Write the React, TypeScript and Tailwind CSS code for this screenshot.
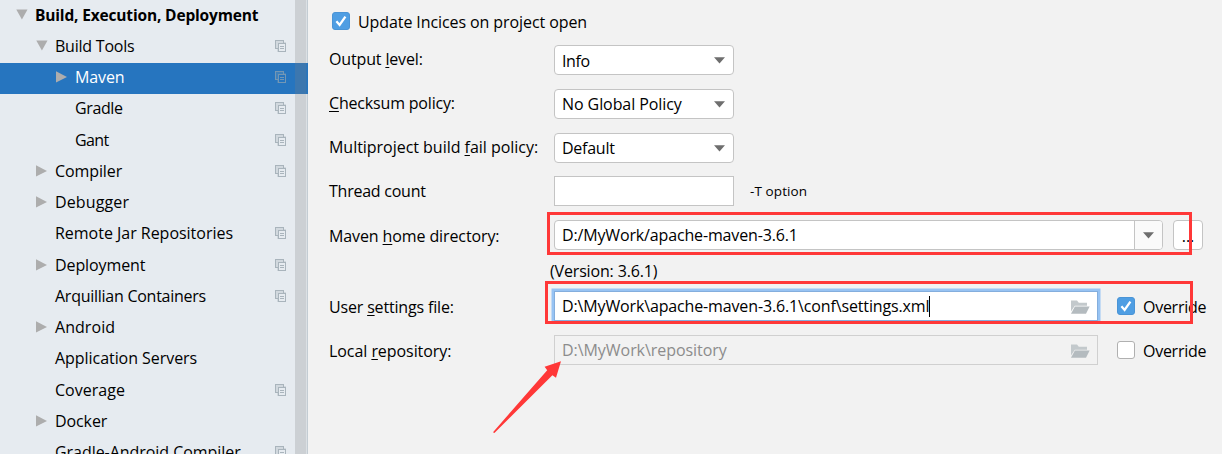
import React from "react";

type Node = {
  label: string;
  indent: string;
  track?: string;
  arrow?: "down" | "right";
  project?: boolean;
  selected?: boolean;
  bold?: boolean;
};

const nodes: Node[] = [
  { label: "Build, Execution, Deployment", indent: "pl-4", track: "tracking-[-0.16px]", arrow: "down", bold: true },
  { label: "Build Tools", indent: "pl-9", track: "tracking-[-0.22px]", arrow: "down", project: true },
  { label: "Maven", indent: "pl-14", track: "tracking-[-0.1px]", arrow: "right", project: true, selected: true },
  { label: "Gradle", indent: "pl-14", track: "tracking-[-0.38px]", project: true },
  { label: "Gant", indent: "pl-14", track: "tracking-[-0.6px]", project: true },
  { label: "Compiler", indent: "pl-9", track: "tracking-[-0.1px]", arrow: "right", project: true },
  { label: "Debugger", indent: "pl-9", track: "tracking-[0.12px]", arrow: "right" },
  { label: "Remote Jar Repositories", indent: "pl-9", track: "tracking-[-0.02px]", project: true },
  { label: "Deployment", indent: "pl-9", track: "tracking-[-0.1px]", arrow: "right", project: true },
  { label: "Arquillian Containers", indent: "pl-9", track: "tracking-[-0.26px]", project: true },
  { label: "Android", indent: "pl-9", track: "tracking-[0.05px]", arrow: "right" },
  { label: "Application Servers", indent: "pl-9", track: "tracking-[-0.05px]" },
  { label: "Coverage", indent: "pl-9", track: "tracking-[0.02px]", project: true },
  { label: "Docker", indent: "pl-9", track: "tracking-[-0.1px]", arrow: "right" },
  { label: "Gradle-Android Compiler", indent: "pl-9", track: "tracking-[-0.05px]", project: true },
];

function TreeArrow({ dir }: { dir?: "down" | "right" }) {
  return (
    <svg className="h-3 w-3 shrink-0" viewBox="0 0 12 12" fill="#adadad">
      {dir === "down" && <path d="M0.3 0.6H11.5L5.9 10.6Z" />}
      {dir === "right" && <path d="M0 0.3V11.5L11 5.9Z" />}
    </svg>
  );
}

function ProjectIcon({ selected }: { selected?: boolean }) {
  return (
    <svg
      className={`h-3 w-[11px] ${selected ? "text-[#7397b5]" : "text-[#a9b4bc]"}`}
      viewBox="0 0 11 12"
      fill="none"
      stroke="currentColor"
      shapeRendering="crispEdges"
    >
      <path d="M2.5 8.5H0.5V0.5H8.5V2.5" />
      <path d="M1.5 8V1.5H8" strokeOpacity="0.35" />
      <rect x="2.5" y="2.5" width="8" height="9" strokeOpacity="0.35" />
      <rect x="3.5" y="3.5" width="7" height="8" />
      <path d="M5 6.5H9M5 8.5H9" />
    </svg>
  );
}

function Sidebar() {
  return (
    <aside className="relative w-[308px] shrink-0 overflow-hidden bg-[#e6ebf0] pt-[0.5px]">
      {nodes.map((n) => (
        <div
          key={n.label}
          className={`flex h-[31.25px] items-center pb-[3px] ${n.indent} ${n.selected ? "bg-[#2675bf] text-white" : "text-black"}`}
        >
          <TreeArrow dir={n.arrow} />
          <span
            className={`ml-[7px] grow whitespace-nowrap ${n.bold ? "text-[15.5px] font-bold" : ""} ${n.track ?? ""}`}
          >
            {n.label}
          </span>
          <span className="mr-[22px] w-[11px] shrink-0">{n.project && <ProjectIcon selected={n.selected} />}</span>
        </div>
      ))}
      <div className="absolute inset-y-0 right-[2px] w-[11px] bg-[#808080]/25" />
      <div className="absolute inset-y-0 right-[1px] w-px bg-[#808080]/10" />
      <div className="absolute inset-y-0 right-0 w-px bg-[#c3ccd3]" />
      <div className="absolute top-[63px] right-0 h-[31px] w-px bg-[#2675bf]" />
    </aside>
  );
}

function Mn({ children }: { children: string }) {
  return (
    <span className="underline decoration-1 underline-offset-2 [text-decoration-skip-ink:none]">{children}</span>
  );
}

function Label({ className, children }: { className: string; children: React.ReactNode }) {
  return <div className={`w-[225px] shrink-0 whitespace-nowrap ${className}`}>{children}</div>;
}

function Caret() {
  return (
    <svg className="h-[7px] w-[11px]" viewBox="0 0 11 7" fill="#6e6e6e">
      <path d="M0 0.3H11L5.5 6.6Z" />
    </svg>
  );
}

function Select({ value, className }: { value: string; className: string }) {
  return (
    <div className="flex h-[30px] w-[180px] items-center justify-between rounded-[4px] border border-[#c4c4c4] bg-white pr-2 pl-[7px]">
      <span className={className}>{value}</span>
      <Caret />
    </div>
  );
}

function Check({ on }: { on?: boolean }) {
  return on ? (
    <svg className="h-[18px] w-[18px] shrink-0" viewBox="0 0 18 18">
      <rect x="0.5" y="0.5" width="17" height="17" rx="2.5" fill="#4f9ee3" stroke="#4a94d6" />
      <path d="M4.4 9.3L7.6 12.9L13.4 4.6" fill="none" stroke="#fff" strokeWidth="2.3" />
    </svg>
  ) : (
    <div className="h-[18px] w-[18px] shrink-0 rounded-[3px] border border-[#b0b0b0] bg-white" />
  );
}

function Folder() {
  return (
    <svg className="h-[14px] w-5" viewBox="0 0 20 14">
      <path d="M1 11.5V0.5H7L8.8 2.8H17V5.8H4.8Z" fill="#c3c9cc" />
      <path d="M4.9 6.6H19.6L16 13.8H1Z" fill="#b4bbbf" />
    </svg>
  );
}

export default function App() {
  return (
    <div className="relative flex h-[454px] w-[1222px] overflow-hidden bg-[#f2f2f2] font-['Open_Sans','Noto_Sans',sans-serif] text-[16px] leading-[30px] text-black">
      <Sidebar />
      <main className="flex grow flex-col pl-[21px]">
        <div className="mt-3 flex h-[33px] items-start pl-[3px]">
          <Check on />
          <span className="ml-2 leading-[21px] tracking-[-0.09px]">Update Incices on project open</span>
        </div>
        <div className="flex h-11">
          <Label className="leading-[28px] tracking-[-0.15px]">
            Output <Mn>l</Mn>evel:
          </Label>
          <Select value="Info" className="pt-px tracking-[-0.4px]" />
        </div>
        <div className="flex h-11">
          <Label className="leading-[29px] tracking-[-0.18px]">
            <Mn>C</Mn>hecksum policy:
          </Label>
          <Select value="No Global Policy" className="tracking-[-0.08px]" />
        </div>
        <div className="flex h-[43px]">
          <Label className="leading-[29px] tracking-[-0.03px]">
            Multiproject build <Mn>f</Mn>ail policy:
          </Label>
          <Select value="Default" className="tracking-[-0.25px]" />
        </div>
        <div className="flex h-11">
          <Label className="tracking-[-0.24px]">Thread count</Label>
          <div className="h-[30px] w-[180px] border border-[#c4c4c4] bg-white" />
          <span className="ml-4 leading-[31px] text-[13.5px] tracking-[0.1px]">-T option</span>
        </div>
        <div className="flex h-[36px]">
          <Label className="leading-[32px] tracking-[-0.11px]">
            Maven <Mn>h</Mn>ome directory:
          </Label>
          <div className="flex h-[30px] w-[609px] overflow-hidden rounded-[4px] border border-[#c4c4c4] bg-white">
            <span className="grow pl-[7px] leading-[28px] tracking-[-0.15px]">D:/MyWork/apache-maven-3.6.1</span>
            <div className="flex w-[28px] items-center justify-center border-l border-[#c4c4c4] bg-[#fafafa]">
              <Caret />
            </div>
          </div>
          <div className="ml-[10px] h-[30px] w-[30px] rounded-[4px] border border-[#c4c4c4] bg-white text-center">
            ...
          </div>
        </div>
        <div className="flex h-[35px] pl-[221px] leading-[30px] tracking-[-0.16px]">(Version: 3.6.1)</div>
        <div className="flex h-11">
          <Label className="leading-[33px] tracking-[-0.17px]">
            User <Mn>s</Mn>ettings file:
          </Label>
          <div className="flex h-[30px] w-[544px] items-center border border-[#84aedd] bg-white pl-[7px] ring-[2.5px] ring-[#97c3f3]">
            <span className="tracking-[-0.14px]">D:\MyWork\apache-maven-3.6.1\conf\settings.xml</span>
            <span className="h-[21px] w-px bg-black" />
            <span className="mt-px mr-[7px] ml-auto flex">
              <Folder />
            </span>
          </div>
          <div className="ml-[19px] flex pt-[6px]">
            <Check on />
            <span className="ml-2 leading-[21px] tracking-[-0.27px]">Override</span>
          </div>
        </div>
        <div className="flex h-[30px]">
          <Label className="leading-[33px] tracking-[-0.06px]">
            Local <Mn>r</Mn>epository:
          </Label>
          <div className="flex h-[30px] w-[544px] items-center border border-[#d0d0d0] pl-[7px] text-[#8c8c8c]">
            <span className="leading-[28px] tracking-[-0.05px]">D:\MyWork\repository</span>
            <span className="mt-px mr-[7px] ml-auto flex">
              <Folder />
            </span>
          </div>
          <div className="ml-[19px] flex pt-[6px]">
            <Check />
            <span className="ml-2 leading-[21px] tracking-[-0.27px]">Override</span>
          </div>
        </div>
      </main>
      <div className="absolute top-[212px] left-[547px] h-[43px] w-[645px] border-3 border-[#ff3838]" />
      <div className="absolute top-[281px] left-[545px] h-[43px] w-[648px] border-3 border-[#ff3838]" />
      <svg className="absolute top-[360px] left-[492px] h-[74px] w-[70px]" viewBox="492 360 70 74" fill="#ff3838">
        <path d="M561 361.2L544.6 366.8L547.2 370.2L493 432.2L494.4 433L552.4 375.2L556 377.8Z" />
      </svg>
    </div>
  );
}
